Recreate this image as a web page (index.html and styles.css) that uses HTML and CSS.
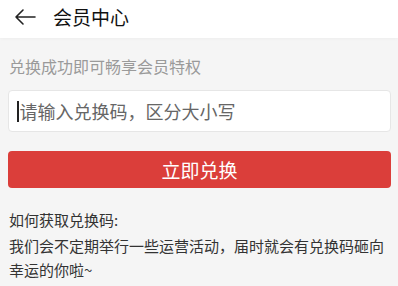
FILE: index.html
```html
<!DOCTYPE html>
<html lang="zh-CN">
<head>
<meta charset="utf-8">
<title>会员中心</title>
<link rel="stylesheet" href="styles.css">
</head>
<body>
<header class="header">
  <svg class="back" width="22" height="18" viewBox="0 0 22 18" aria-hidden="true">
    <path d="M9 2 L2 9 L9 16 M2 9 H21" fill="none" stroke="#222" stroke-width="1.6" stroke-linecap="round" stroke-linejoin="round"/>
  </svg>
  <h1 class="title">会员中心</h1>
</header>
<main class="content">
  <p class="subtitle">兑换成功即可畅享会员特权</p>
  <div class="input"><span class="caret"></span><span class="placeholder">请输入兑换码，区分大小写</span></div>
  <button class="btn" type="button">立即兑换</button>
  <p class="help-title">如何获取兑换码:</p>
  <p class="help-text">我们会不定期举行一些运营活动，届时就会有兑换码砸向幸运的你啦~</p>
</main>
</body>
</html>
```
FILE: styles.css
```css
html, body {
  margin: 0;
  padding: 0;
}
body {
  background: #f5f5f5;
  font-family: "Noto Sans CJK SC", "Noto Sans", sans-serif;
  color: #333;
  width: 398px;
  height: 286px;
  overflow: hidden;
}
.header {
  height: 38px;
  box-sizing: border-box;
  background: #fff;
  display: flex;
  align-items: center;
  padding: 0 0 5px 14px;
  box-shadow: 0 1px 3px rgba(0,0,0,0.03);
}
.back {
  display: block;
  flex: none;
}
.title {
  margin: 0 0 0 17px;
  font-size: 19px;
  font-weight: normal;
  color: #111;
  line-height: 24px;
}
.content {
  padding: 0 7px 0 8px;
}
.subtitle {
  margin: 16px 0 0 1px;
  font-size: 16px;
  line-height: 24px;
  color: #9a9a9a;
}
.input {
  margin-top: 12px;
  height: 42px;
  box-sizing: border-box;
  background: #fff;
  border: 1px solid #e6e6e6;
  border-radius: 4px;
  display: flex;
  align-items: center;
  padding-left: 8px;
}
.caret {
  width: 1.5px;
  height: 21px;
  background: #222;
  margin-right: 1px;
  flex: none;
}
.placeholder {
  font-size: 18px;
  color: #666;
  line-height: 24px;
}
.btn {
  display: block;
  width: 100%;
  margin-top: 19px;
  height: 37px;
  border: none;
  border-radius: 4px;
  background: #db3e3a;
  color: #fff;
  font-family: inherit;
  font-size: 19px;
  line-height: 37px;
  padding: 0;
}
.help-title {
  margin: 20px 0 0 1px;
  font-size: 15px;
  line-height: 24px;
  color: #333;
}
.help-text {
  margin: 2px 0 0 1px;
  font-size: 15px;
  line-height: 24px;
  color: #333;
}
```
